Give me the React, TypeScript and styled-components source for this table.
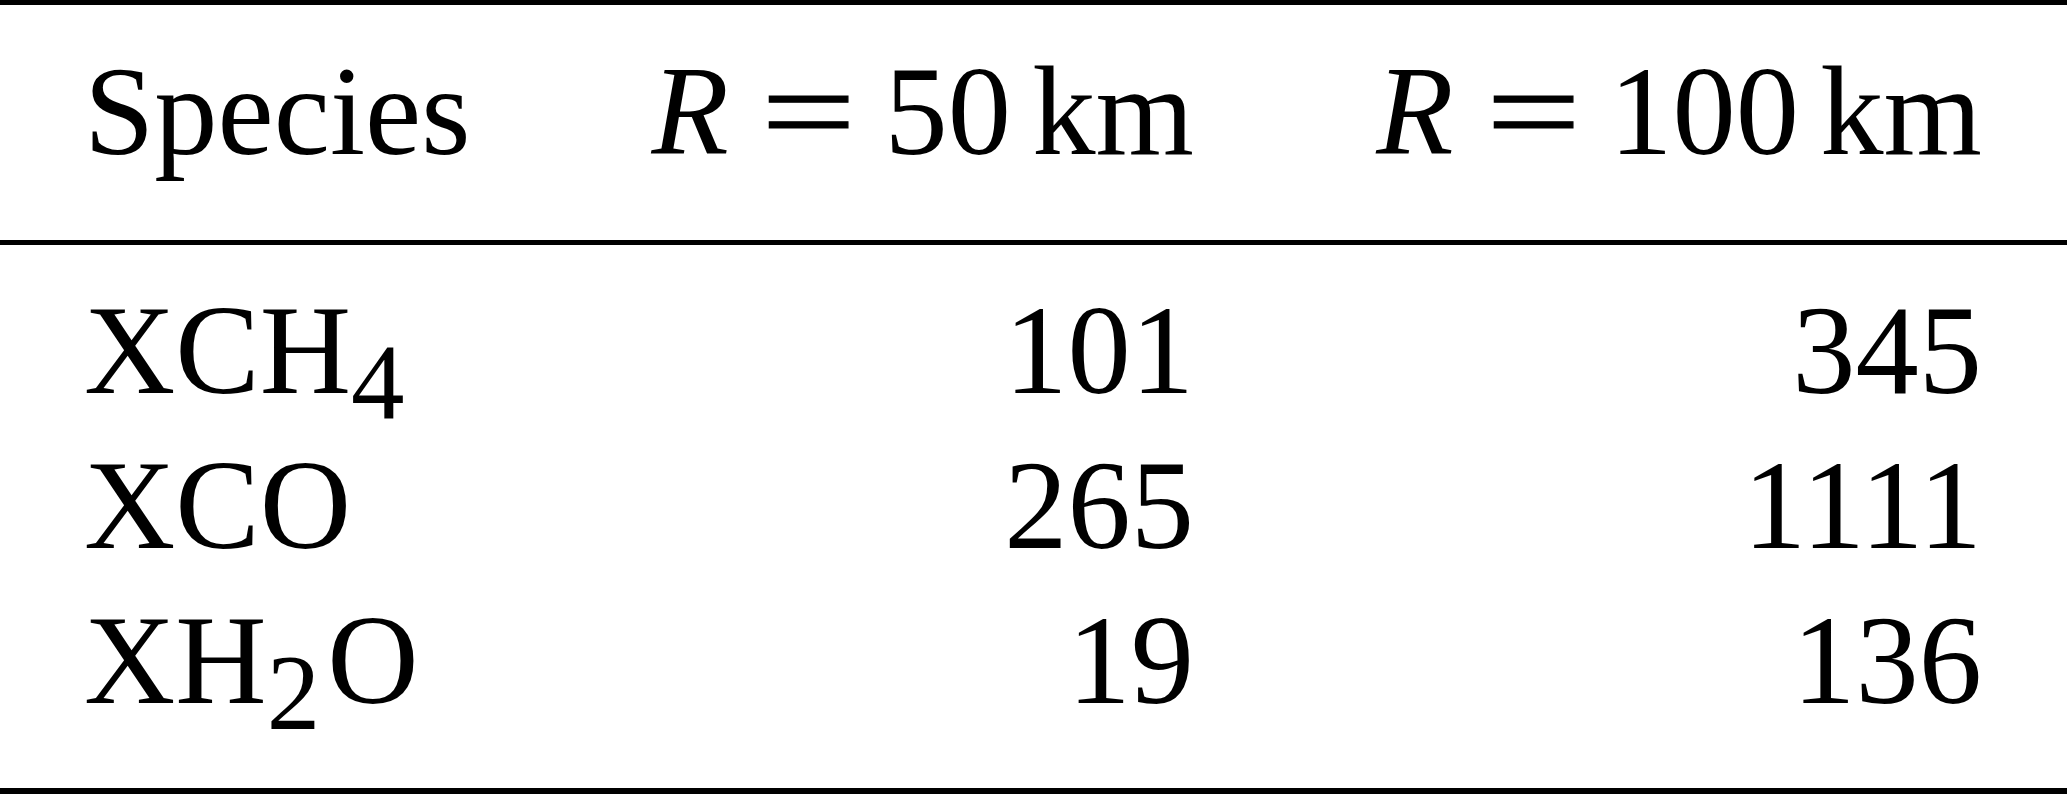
import styled, { createGlobalStyle } from "styled-components";

const GlobalStyle = createGlobalStyle`
  html, body {
    margin: 0;
    padding: 0;
    background: #fff;
  }
  body {
    font-family: "Liberation Serif", "Times New Roman", Times, serif;
    color: #000;
  }
`;

const Table = styled.div`
  width: 2067px;
  height: 794px;
  display: flex;
  flex-direction: column;
  font-family: "Liberation Serif", "Times New Roman", Times, serif;
  font-size: 126.5px;
  color: #000;
`;

const Rule = styled.div<{ $h: number }>`
  flex: none;
  height: ${(p) => p.$h}px;
  background: #000;
`;

const Row = styled.div`
  display: grid;
  grid-template-columns: 1fr 600px 788px;
  padding: 0 85px 0 84px;
  line-height: 154.75px;
  white-space: nowrap;
`;

const HeadRow = styled(Row)`
  line-height: 141px;
  padding-top: 36px;
  padding-bottom: 58px;
`;

const Body = styled.div`
  padding: 28.2px 0 50.5px;
`;

const Cell = styled.div<{ $num?: boolean }>`
  text-align: ${(p) => (p.$num ? "right" : "left")};
`;

// math italic variable
const Var = styled.span`
  font-style: italic;
  margin-right: 44.5px;
`;

// TeX's = is wider and bolder than the text one
const Eq = styled.span`
  display: inline-block;
  transform: scaleX(1.333);
  -webkit-text-stroke: 1px #000;
  margin-right: 40px;
`;

const Unit = styled.span`
  margin-left: 21.3px;
`;

const Sub = styled.span<{ $gap?: number }>`
  font-size: 0.846em;
  line-height: 0;
  vertical-align: -26px;
  margin-right: ${(p) => p.$gap ?? 0}px;
`;

const Radius = ({ km }: { km: number }) => (
  <>
    <Var>R</Var>
    <Eq>=</Eq>
    {km}
    <Unit>km</Unit>
  </>
);

const rows = [
  { name: <>XCH<Sub>4</Sub></>, r50: "101", r100: "345" },
  { name: <>XCO</>, r50: "265", r100: "1111" },
  { name: <>XH<Sub $gap={7}>2</Sub>O</>, r50: "19", r100: "136" },
];

const App = () => {
  return (
    <>
      <GlobalStyle />
      <Table>
        <Rule $h={5} />
        <HeadRow>
          <Cell>Species</Cell>
          <Cell $num><Radius km={50} /></Cell>
          <Cell $num><Radius km={100} /></Cell>
        </HeadRow>
        <Rule $h={5} />
        <Body>
          {rows.map((r, i) => (
            <Row key={i}>
              <Cell>{r.name}</Cell>
              <Cell $num>{r.r50}</Cell>
              <Cell $num>{r.r100}</Cell>
            </Row>
          ))}
        </Body>
        <Rule $h={6} />
      </Table>
    </>
  );
};

export default App;
